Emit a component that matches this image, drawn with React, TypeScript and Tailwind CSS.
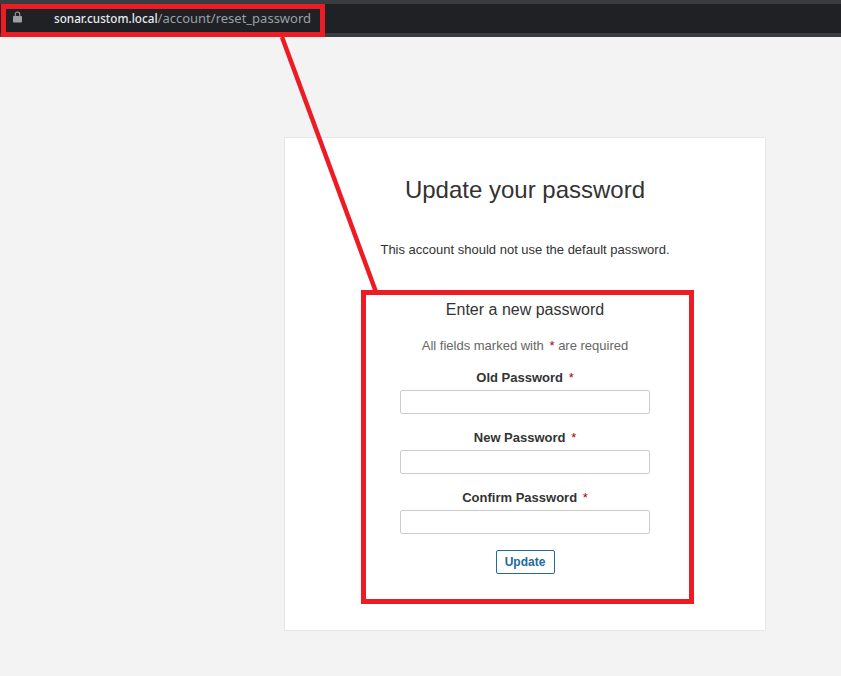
function Field({ label, mt }: { label: string; mt: string }) {
  return (
    <div className={`flex flex-col items-center ${mt}`}>
      <label className="h-[20px] text-[13px] leading-[20px] font-bold text-[#333]">
        {label} <span className="ml-[2px] font-normal text-[#a00]">*</span>
      </label>
      <input
        type="password"
        className="mt-[2px] h-[24px] w-[250px] rounded-[2px] border border-[#cdcdcd] bg-white"
      />
    </div>
  );
}

export default function App() {
  return (
    <div className="relative h-[676px] w-[841px] overflow-hidden bg-[#f3f3f3] font-['Liberation_Sans',Arial,sans-serif]">
      {/* Browser address bar */}
      <div className="flex h-[37px] flex-col bg-[#202124]">
        <div className="h-[4px] bg-[#3b3c40]" />
        <div className="flex h-[29px] items-center">
          <svg width="9" height="12" viewBox="0 0 10 12" className="ml-[13px] mb-[3px]" fill="#9aa0a6">
            <path d="M1 5h8a1 1 0 0 1 1 1v5a1 1 0 0 1-1 1H1a1 1 0 0 1-1-1V6a1 1 0 0 1 1-1z" />
            <path d="M2.5 5V3a2.5 2.5 0 0 1 5 0v2" fill="none" stroke="#9aa0a6" strokeWidth="1.2" />
          </svg>
          <span className="ml-[32px] font-['Noto_Sans',sans-serif] text-[11.7px] font-medium text-[#e8eaed]">
            sonar.custom.local
          </span>
          <span className="font-['Noto_Sans',sans-serif] text-[13px] text-[#9aa0a6]">/account/reset_password</span>
        </div>
        <div className="h-[4px] bg-[#3b3c40]" />
      </div>

      {/* Page */}
      <main className="ml-[284px] mt-[100px] h-[494px] w-[482px] border border-[#e6e6e6] bg-white text-center">
        <h1 className="mt-[36px] text-[24px] leading-[32px] text-[#333]">Update your password</h1>
        <p className="mt-[34px] text-[13px] leading-[20px] text-[#333]">
          This account should not use the default password.
        </p>
        <h2 className="mt-[40px] text-[16px] leading-[20px] text-[#333]">Enter a new password</h2>
        <p className="mt-[16px] text-[13px] leading-[20px] text-[#666]">
          All fields marked with <span className="ml-[2px] text-[#a00]">*</span> are required
        </p>
        <Field label="Old Password" mt="mt-[12px]" />
        <Field label="New Password" mt="mt-[14px]" />
        <Field label="Confirm Password" mt="mt-[14px]" />
        <button className="mt-[16px] h-[24px] w-[59px] rounded-[2px] border border-[#236a97] bg-white text-[12px] font-bold text-[#236a97]">
          Update
        </button>
      </main>

      {/* Red annotations */}
      <div className="absolute left-[1px] top-[4px] h-[33px] w-[324px] border-[5px] border-[#ed1c24]" />
      <div className="absolute left-[361px] top-[290px] h-[314px] w-[333px] border-[5px] border-[#ed1c24]" />
      <svg className="absolute left-0 top-0" width="841" height="676">
        <line x1="282" y1="37" x2="376" y2="292" stroke="#ed1c24" strokeWidth="4.5" />
      </svg>
    </div>
  );
}
